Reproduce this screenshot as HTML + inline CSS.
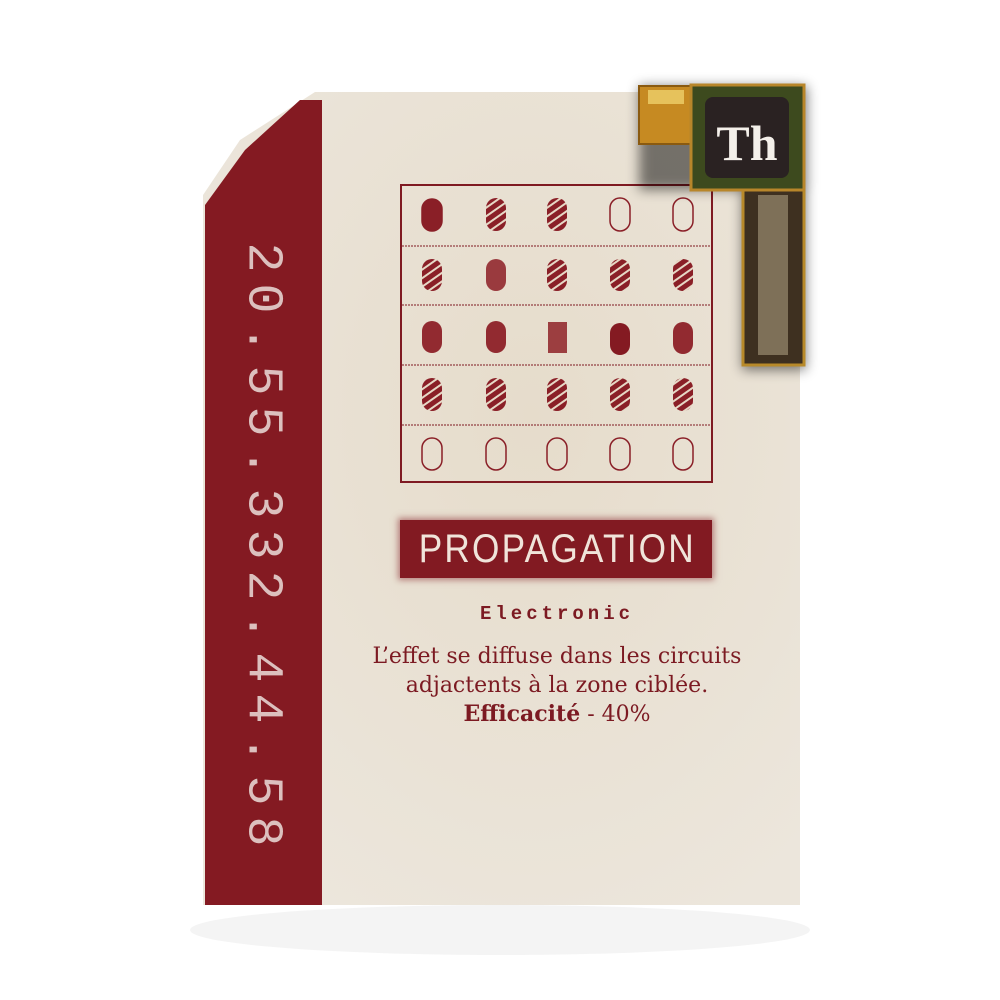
<!DOCTYPE html>
<html><head><meta charset="utf-8"><style>
html,body{margin:0;padding:0;background:#fff;width:1000px;height:1000px;overflow:hidden;position:relative}
.num{position:absolute;left:262px;top:550px;transform:translate(-50%,-50%) rotate(90deg);font-family:"Liberation Mono",monospace;font-size:50px;letter-spacing:11px;color:#e6d2cf;white-space:nowrap;opacity:.9}
.banner{position:absolute;left:400px;top:520px;width:312px;height:58px;background:#821a22;box-shadow:0 0 6px 2px rgba(130,26,34,.5)}
.banner span{display:block;text-align:center;font-family:"Liberation Sans",sans-serif;font-size:40px;line-height:58px;color:#f0e4da;letter-spacing:2.5px;transform:scaleX(.88)}
.t{position:absolute;left:257px;width:600px;text-align:center;color:#7c1a22;font-family:"DejaVu Serif",serif}
</style></head><body>
<svg width="1000" height="1000" style="position:absolute;left:0;top:0">
<defs>
<pattern id="st" width="7" height="7" patternUnits="userSpaceOnUse" patternTransform="rotate(-35)">
<rect width="7" height="7" fill="#8a1f27"/><rect width="7" height="2" fill="#e6d8c6"/></pattern>
<radialGradient id="pg" cx="0.55" cy="0.4" r="0.7"><stop offset="0" stop-color="#e6dccb"/><stop offset="1" stop-color="#ece6dc"/></radialGradient>
<filter id="bl"><feGaussianBlur stdDeviation="6"/></filter>
</defs>
<ellipse cx="500" cy="930" rx="310" ry="25" fill="#efefef" opacity=".7"/>
<polygon points="315,92 800,92 800,905 203,905 203,195 240,140" fill="url(#pg)"/>
<polygon points="300,100 322,100 322,905 205,905 205,205 245,150" fill="#841a22"/>
<rect x="401" y="185" width="311" height="297" fill="none" stroke="#7f1a22" stroke-width="2"/>
<g stroke="#7f1a22" stroke-width="1" stroke-dasharray="2,1">
<line x1="402" y1="246" x2="711" y2="246"/><line x1="402" y1="305" x2="711" y2="305"/><line x1="402" y1="365" x2="711" y2="365"/><line x1="402" y1="425" x2="711" y2="425"/></g>
<g stroke="#8a1f27" stroke-width="1.5">
<rect x="422" y="199" width="20" height="32" rx="10" fill="#8a1f27"/>
<rect x="486" y="198" width="20" height="33" rx="10" fill="url(#st)" stroke="none"/>
<rect x="547" y="198" width="20" height="33" rx="10" fill="url(#st)" stroke="none"/>
<rect x="610" y="198" width="20" height="33" rx="10" fill="none"/>
<rect x="673" y="198" width="20" height="33" rx="10" fill="none"/>
<rect x="422" y="259" width="20" height="32" rx="10" fill="url(#st)" stroke="none"/>
<rect x="486" y="259" width="20" height="32" rx="10" fill="#9a3a3e" stroke="none"/>
<rect x="547" y="259" width="20" height="32" rx="10" fill="url(#st)" stroke="none"/>
<rect x="610" y="259" width="20" height="32" rx="10" fill="url(#st)" stroke="none"/>
<rect x="673" y="259" width="20" height="32" rx="10" fill="url(#st)" stroke="none"/>
<rect x="422" y="321" width="20" height="32" rx="10" fill="#922a30" stroke="none"/>
<rect x="486" y="321" width="20" height="32" rx="10" fill="#922a30" stroke="none"/>
<rect x="548" y="322" width="19" height="31" fill="#9c3e40" stroke="none"/>
<rect x="610" y="323" width="20" height="32" rx="10" fill="#841a22" stroke="none"/>
<rect x="673" y="322" width="20" height="32" rx="10" fill="#922a30" stroke="none"/>
<rect x="422" y="378" width="20" height="33" rx="10" fill="url(#st)" stroke="none"/>
<rect x="486" y="378" width="20" height="33" rx="10" fill="url(#st)" stroke="none"/>
<rect x="547" y="378" width="20" height="33" rx="10" fill="url(#st)" stroke="none"/>
<rect x="610" y="378" width="20" height="33" rx="10" fill="url(#st)" stroke="none"/>
<rect x="673" y="378" width="20" height="33" rx="10" fill="url(#st)" stroke="none"/>
<rect x="422" y="438" width="20" height="32" rx="10" fill="none"/>
<rect x="486" y="438" width="20" height="32" rx="10" fill="none"/>
<rect x="547" y="438" width="20" height="32" rx="10" fill="none"/>
<rect x="610" y="438" width="20" height="32" rx="10" fill="none"/>
<rect x="673" y="438" width="20" height="32" rx="10" fill="none"/>
</g>
<g filter="url(#bl)" opacity=".5"><rect x="639" y="86" width="168" height="104" fill="#000"/><rect x="742" y="188" width="64" height="182" fill="#000"/></g>
<rect x="743" y="188" width="61" height="177" fill="#3e3020" stroke="#b88a2a" stroke-width="3"/>
<g fill="#9a8c70" opacity=".7"><rect x="758" y="195" width="30" height="160"/></g>
<rect x="639" y="86" width="54" height="58" fill="#c68a22" stroke="#8a5a10" stroke-width="2"/>
<rect x="648" y="90" width="36" height="14" fill="#e6c25c"/>
<rect x="691" y="85" width="113" height="105" fill="#3d4a1e" stroke="#b8862a" stroke-width="3"/>
<rect x="705" y="97" width="84" height="81" rx="8" fill="#2a2222"/>
<text x="747" y="160" text-anchor="middle" font-family="Liberation Serif,serif" font-size="50" font-weight="bold" fill="#f4f0ea">Th</text>
</svg>
<div class="num">20.55.332.44.58</div>
<div class="banner"><span>PROPAGATION</span></div>
<div class="t" style="top:603px;font-family:'Liberation Mono',monospace;font-weight:bold;font-size:19px;letter-spacing:4px">Electronic</div>
<div class="t" style="top:642px;font-size:22px;line-height:29px">L’effet se diffuse dans les circuits<br>adjactents à la zone ciblée.<br><b>Efficacité</b> - 40%</div>
</body></html>
